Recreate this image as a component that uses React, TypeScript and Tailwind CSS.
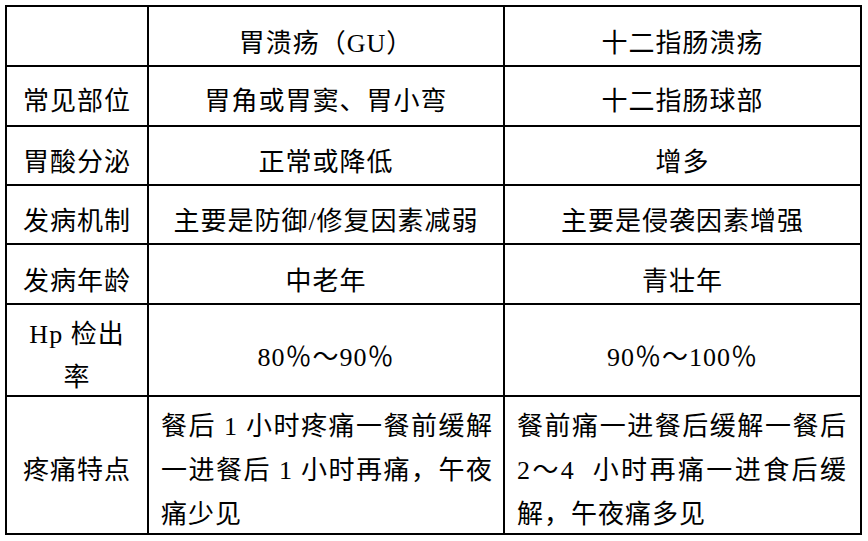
import React from "react";

const font = {
  fontFamily: "'Liberation Serif', 'Noto Sans CJK SC', serif",
};

function Cell({
  children,
  pt = "pt-[15px]",
  className = "",
}: {
  children?: React.ReactNode;
  pt?: string;
  className?: string;
}) {
  return (
    <div
      className={`bg-white flex items-center justify-center text-center text-black text-[26px] tracking-[1px] leading-[30px] whitespace-nowrap ${pt} ${className}`}
    >
      {children}
    </div>
  );
}

export default function App() {
  return (
    <div
      className="bg-white w-[868px] h-[541px] pt-[5px] pl-[5px]"
      style={font}
    >
      <div className="grid grid-cols-[140px_354px_355px] grid-rows-[58px_58px_57px_57px_58px_90px_136px] gap-[2px] p-[2px] bg-black w-[857px]">
        {/* header */}
        <Cell />
        <Cell>胃溃疡（GU）</Cell>
        <Cell>十二指肠溃疡</Cell>

        <Cell pt="pt-[11px]">常见部位</Cell>
        <Cell pt="pt-[11px]">胃角或胃窦、胃小弯</Cell>
        <Cell pt="pt-[11px]">十二指肠球部</Cell>

        <Cell>胃酸分泌</Cell>
        <Cell>正常或降低</Cell>
        <Cell>增多</Cell>

        <Cell>发病机制</Cell>
        <Cell>主要是防御/修复因素减弱</Cell>
        <Cell>主要是侵袭因素增强</Cell>

        <Cell>发病年龄</Cell>
        <Cell>中老年</Cell>
        <Cell>青壮年</Cell>

        <Cell pt="pt-[11px]" className="leading-[43px]">
          <div className="flex flex-col items-center">
            <span>Hp 检出</span>
            <span>率</span>
          </div>
        </Cell>
        <Cell>80％～90％</Cell>
        <Cell>90％～100％</Cell>

        <Cell pt="pt-[12px]">疼痛特点</Cell>
        <div className="bg-white flex items-center pt-[12px] pl-[12px] pr-[10px] text-black text-[26px] tracking-[1px] leading-[44px] whitespace-nowrap">
          <div className="flex flex-col w-full">
            <span className="text-justify [text-align-last:justify]">
              餐后 1 小时疼痛一餐前缓解
            </span>
            <span className="text-justify [text-align-last:justify]">
              一进餐后 1 小时再痛，午夜
            </span>
            <span className="text-left">痛少见</span>
          </div>
        </div>
        <div className="bg-white flex items-center pt-[12px] pl-[12px] pr-[13px] text-black text-[26px] tracking-[1px] leading-[44px] whitespace-nowrap">
          <div className="flex flex-col w-full">
            <span className="text-justify [text-align-last:justify]">
              餐前痛一进餐后缓解一餐后
            </span>
            <span className="text-justify [text-align-last:justify]">
              2～4&nbsp; 小时再痛一进食后缓
            </span>
            <span className="text-left">解，午夜痛多见</span>
          </div>
        </div>
      </div>
    </div>
  );
}
